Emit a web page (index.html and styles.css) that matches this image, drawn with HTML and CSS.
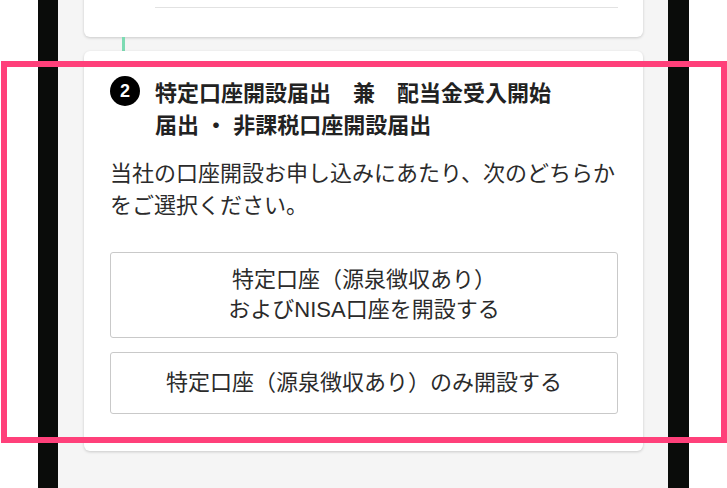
FILE: index.html
```html
<!DOCTYPE html>
<html lang="ja">
<head>
  <meta charset="UTF-8" />
  <meta name="viewport" content="width=device-width, initial-scale=1.0"/>
  <title>口座開設</title>
  <link rel="stylesheet" href="styles.css">
</head>
<body>
  <div class="frame">
    <div class="screen">
      <section class="card card-prev">
        <div class="prev-row"></div>
      </section>

      <div class="connector"></div>

      <section class="card step">
        <h2 class="step-title">
          <span class="badge">2</span>
          <span>特定口座開設届出　兼　配当金受入開始<br>届出 ・ 非課税口座開設届出</span>
        </h2>

        <p class="lead">当社の口座開設お申し込みにあたり、次のどちらかをご選択ください。</p>

        <div class="choices">
          <button type="button">特定口座（源泉徴収あり）<br>およびNISA口座を開設する</button>
          <button type="button">特定口座（源泉徴収あり）のみ開設する</button>
        </div>
      </section>
    </div>
  </div>

  <div class="highlight"></div>
</body>
</html>
```

FILE: styles.css
```css
body {
  margin: 0;
  height: 488px;
  overflow: hidden;
  background-color: #fff;
  color: #2b2b2b;
  font-family: "Liberation Sans", "Noto Sans CJK JP", sans-serif;
}

.frame {
  margin-left: 38px;
  width: 610px;
  height: 488px;
  border-left: 20px solid #0a0c0a;
  border-right: 21px solid #0a0c0a;
}

.screen {
  display: flow-root;
  height: 100%;
  background-color: #f5f5f5;
  padding: 0 25px 0 26px;
}

.card {
  background: white;
  border-radius: 6px;
  box-shadow: 0 1px 3px rgba(0,0,0,0.18);
}

.card-prev {
  margin-top: -30px;
  padding: 0 25px 29px 71px;
}

.prev-row {
  height: 37px;
  border-bottom: 1px solid #e2e2e2;
}

.connector {
  width: 3px;
  height: 14px;
  margin-left: 38px;
  background-color: #7ddbb3;
}

.step {
  padding: 27px 25px 37px 26px;
}

.step-title {
  display: flex;
  gap: 15px;
  margin: 0;
  font-size: 22px;
  line-height: 32px;
  font-weight: bold;
  color: #222;
}

.badge {
  flex-shrink: 0;
  display: flex;
  align-items: center;
  justify-content: center;
  width: 30px;
  height: 30px;
  margin-top: -2px;
  border-radius: 50%;
  background-color: #000;
  color: white;
  font-size: 18px;
  font-family: "Liberation Sans", sans-serif;
}

.lead {
  margin: 16px 0 0;
  font-size: 22px;
  line-height: 32px;
}

.choices {
  display: flex;
  flex-direction: column;
  gap: 14px;
  margin-top: 30px;
}

.choices button {
  width: 100%;
  min-height: 62px;
  padding: 12px 10px;
  border: 1px solid #c9c9c9;
  border-radius: 3px;
  background: white;
  color: #2b2b2b;
  font-family: inherit;
  font-size: 22px;
  line-height: 30px;
  cursor: pointer;
}

.highlight {
  position: absolute;
  left: 1px;
  top: 61px;
  width: 726px;
  height: 382px;
  box-sizing: border-box;
  border: 6px solid #ff407a;
}
```
